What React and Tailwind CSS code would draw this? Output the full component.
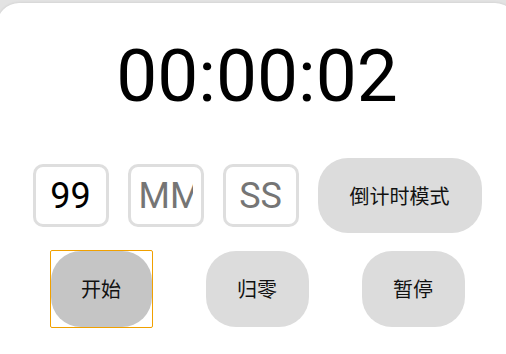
import React, { useState } from 'react';

const boxCls =
    "w-[76px] h-[63px] border-[3px] border-[#dedede] rounded-[10px] px-[8px] text-center text-[36px] text-black placeholder:text-[#757575] outline-none font-['Roboto',sans-serif]";
const pillCls =
    "w-[103px] h-[76px] rounded-[30px] bg-[#dcdcdc] text-[20px] text-[#111] font-['Noto_Sans_CJK_SC','Noto_Sans',sans-serif]";

export default function App() {
    const [hours, setHours] = useState('99');
    const [minutes, setMinutes] = useState('');
    const [seconds, setSeconds] = useState('');

    return (
        <div className="w-[506px] h-[354px] overflow-hidden bg-[#e3e3e3]">
            {/* card */}
            <div className="ml-[-3px] mt-[3px] w-[520px] min-h-[420px] rounded-[22px] bg-white shadow-[0_0_3px_rgba(0,0,0,0.12)] pt-[37px] flex flex-col items-center">
                <div className="text-[73px] leading-none text-black font-['Roboto',sans-serif]">
                    00:00:02
                </div>

                {/* inputs row */}
                <div className="mt-[45px] flex items-center gap-[19px]">
                    <input className={boxCls} placeholder="HH" value={hours} onChange={(e) => setHours(e.target.value)} />
                    <input className={boxCls} placeholder="MM" value={minutes} onChange={(e) => setMinutes(e.target.value)} />
                    <input className={boxCls} placeholder="SS" value={seconds} onChange={(e) => setSeconds(e.target.value)} />
                    <button className="w-[164px] h-[75px] rounded-[30px] bg-[#dcdcdc] text-[20px] text-[#111] font-['Noto_Sans_CJK_SC','Noto_Sans',sans-serif]">
                        倒计时模式
                    </button>
                </div>

                {/* controls */}
                <div className="mt-[17px] flex items-center gap-[53px]">
                    <div className="w-[103px] h-[78px] border border-[#f0a000] rounded-[2px]">
                        <button className="w-full h-full rounded-[30px] bg-[#c5c5c5] text-[20px] text-[#111] font-['Noto_Sans_CJK_SC','Noto_Sans',sans-serif]">
                            开始
                        </button>
                    </div>
                    <button className={pillCls}>归零</button>
                    <button className={pillCls}>暂停</button>
                </div>
            </div>
        </div>
    );
}
